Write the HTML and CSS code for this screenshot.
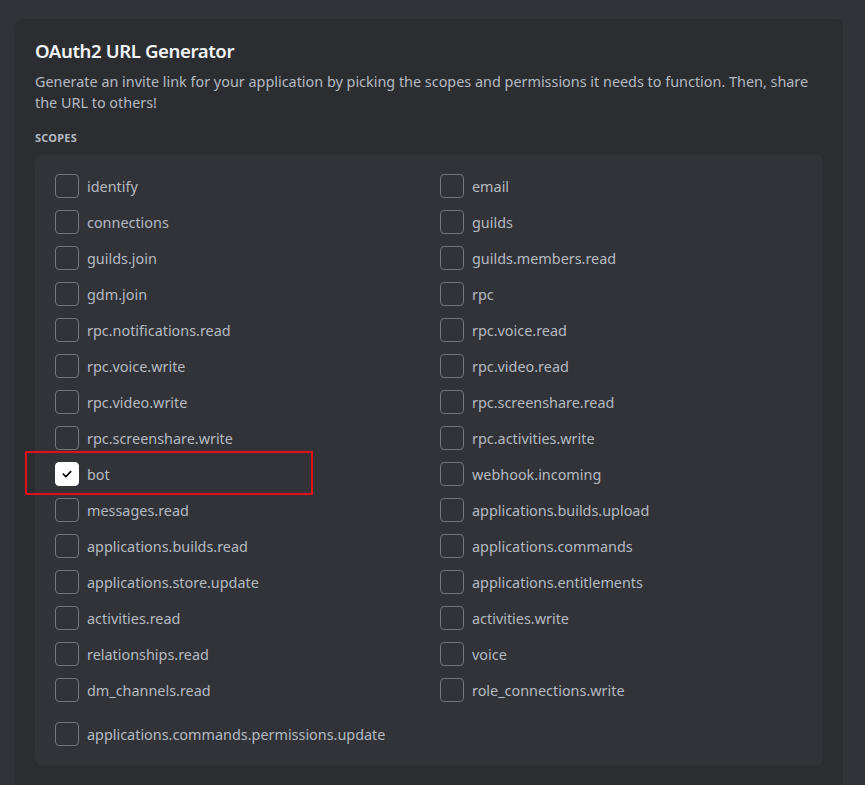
FILE: index.html
```html
<!DOCTYPE html>
<html lang="en">
<head>
<meta charset="utf-8">
<title>OAuth2 URL Generator</title>
<link rel="stylesheet" href="styles.css">
</head>
<body>
<div class="page">
  <section class="card">
    <h1 class="title">OAuth2 URL Generator</h1>
    <p class="desc">Generate an invite link for your application by picking the scopes and permissions it needs to function. Then, share the URL to others!</p>
    <h2 class="label">Scopes</h2>
    <div class="scopes">
      <div class="grid">
        <label class="item"><span class="box"></span><span class="name">identify</span></label>
        <label class="item"><span class="box"></span><span class="name">email</span></label>
        <label class="item"><span class="box"></span><span class="name">connections</span></label>
        <label class="item"><span class="box"></span><span class="name">guilds</span></label>
        <label class="item"><span class="box"></span><span class="name">guilds.join</span></label>
        <label class="item"><span class="box"></span><span class="name">guilds.members.read</span></label>
        <label class="item"><span class="box"></span><span class="name">gdm.join</span></label>
        <label class="item"><span class="box"></span><span class="name">rpc</span></label>
        <label class="item"><span class="box"></span><span class="name">rpc.notifications.read</span></label>
        <label class="item"><span class="box"></span><span class="name">rpc.voice.read</span></label>
        <label class="item"><span class="box"></span><span class="name">rpc.voice.write</span></label>
        <label class="item"><span class="box"></span><span class="name">rpc.video.read</span></label>
        <label class="item"><span class="box"></span><span class="name">rpc.video.write</span></label>
        <label class="item"><span class="box"></span><span class="name">rpc.screenshare.read</span></label>
        <label class="item"><span class="box"></span><span class="name">rpc.screenshare.write</span></label>
        <label class="item"><span class="box"></span><span class="name">rpc.activities.write</span></label>
        <label class="item highlighted"><span class="box checked"><svg viewBox="0 0 24 24" width="24" height="24"><path d="M8 12.2l2.8 2.8 5.2-5.6" fill="none" stroke="#000" stroke-width="1.8" stroke-linecap="round" stroke-linejoin="round"/></svg></span><span class="name">bot</span></label>
        <label class="item"><span class="box"></span><span class="name">webhook.incoming</span></label>
        <label class="item"><span class="box"></span><span class="name">messages.read</span></label>
        <label class="item"><span class="box"></span><span class="name">applications.builds.upload</span></label>
        <label class="item"><span class="box"></span><span class="name">applications.builds.read</span></label>
        <label class="item"><span class="box"></span><span class="name">applications.commands</span></label>
        <label class="item"><span class="box"></span><span class="name">applications.store.update</span></label>
        <label class="item"><span class="box"></span><span class="name">applications.entitlements</span></label>
        <label class="item"><span class="box"></span><span class="name">activities.read</span></label>
        <label class="item"><span class="box"></span><span class="name">activities.write</span></label>
        <label class="item"><span class="box"></span><span class="name">relationships.read</span></label>
        <label class="item"><span class="box"></span><span class="name">voice</span></label>
        <label class="item"><span class="box"></span><span class="name">dm_channels.read</span></label>
        <label class="item"><span class="box"></span><span class="name">role_connections.write</span></label>
      </div>
      <label class="item wide"><span class="box"></span><span class="name">applications.commands.permissions.update</span></label>
    </div>
  </section>
</div>
</body>
</html>
```
FILE: styles.css
```css
*, *::before, *::after { box-sizing: border-box; }
html, body { margin: 0; padding: 0; }
body {
  background: #313338;
  font-family: "Noto Sans", "Open Sans", sans-serif;
  width: 865px;
  height: 785px;
  overflow: hidden;
}
.page {
  padding: 19px 22px 0 15px;
}
.card {
  background: #2b2d31;
  border-radius: 8px;
  padding: 20px 20px 40px 20px;
}
.title {
  margin: 0;
  color: #f2f3f5;
  font-size: 18.6px;
  font-weight: 600;
  line-height: 24px;
  letter-spacing: -0.4px;
}
.desc {
  margin: 8px 0 0 0;
  color: #b5bac1;
  font-size: 14.4px;
  line-height: 21px;
}
.label {
  margin: 17px 0 0 0;
  color: #b5bac1;
  font-size: 11px;
  font-weight: 700;
  text-transform: uppercase;
  line-height: 16px;
  letter-spacing: 0.02em;
}
.scopes {
  margin-top: 8px;
  background: #313338;
  border-radius: 8px;
  padding: 20px;
  display: flex;
  flex-direction: column;
  gap: 20px;
}
.grid {
  display: grid;
  grid-template-columns: 385px 1fr;
  row-gap: 12px;
}
.item {
  position: relative;
  display: flex;
  align-items: center;
  height: 24px;
  gap: 8px;
  color: #b5bac1;
  font-size: 14.4px;
}
.box {
  width: 24px;
  height: 24px;
  border: 1px solid #72767d;
  border-radius: 4px;
  flex: none;
  display: flex;
  align-items: center;
  justify-content: center;
}
.box.checked {
  background: #ffffff;
  border-color: #ffffff;
}
.box.checked svg { display: block; }
.name { white-space: nowrap; }
.highlighted::after {
  content: "";
  position: absolute;
  left: -30px;
  top: -11px;
  width: 288px;
  height: 44px;
  border: 2px solid #e3101a;
}
```
